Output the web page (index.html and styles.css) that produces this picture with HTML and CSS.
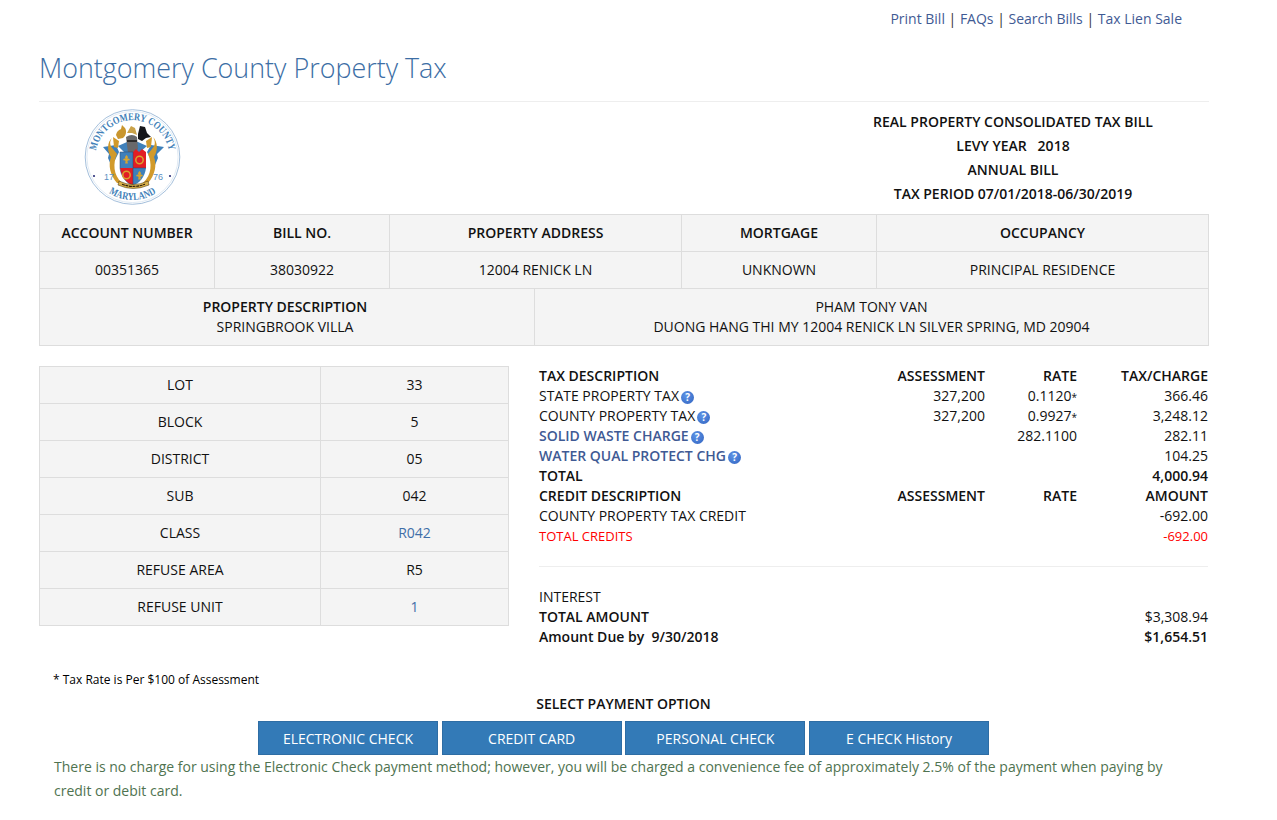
FILE: index.html
```html
<!DOCTYPE html>
<html lang="en">
<head>
    <meta charset="UTF-8">
    <title>Montgomery County Property Tax</title>
    <link rel="stylesheet" href="styles.css">
</head>
<body>
    <div class="page">
        <nav class="top-links">
            <a href="#">Print Bill</a> | <a href="#">FAQs</a> | <a href="#">Search Bills</a> | <a href="#">Tax Lien Sale</a>
        </nav>
        <h1 class="site-title">Montgomery County Property Tax</h1>

        <div class="bill-head">
            <div class="seal-box">
                <svg class="seal" viewBox="0 0 105 105" width="105" height="105" role="img" aria-label="Montgomery County seal">
                    <defs>
                        <path id="sealArc" d="M16.4 60.3 A37 37 0 1 1 88.6 60.3"/>
                        <path id="sealArcLow" d="M27.8 87.2 A43 43 0 0 0 77.2 87.2"/>
                        <path id="fleur" d="M0 -5 C1.8 -3.4 1.8 -1.8 .7 -.9 C1.8 -2.2 3.6 -1.3 3.2 .6 C2.7 .2 1.8 .2 .9 .9 L1.4 3.4 H-1.4 L-.9 .9 C-1.8 .2 -2.7 .2 -3.2 .6 C-3.6 -1.3 -1.8 -2.2 -.7 -.9 C-1.8 -1.8 -1.8 -3.4 0 -5 Z"/>
                    </defs>
                    <circle class="seal-ring" cx="52.5" cy="52" r="47.3"/>
                    <circle class="seal-ring thin" cx="52.5" cy="52" r="45.6"/>
                    <text class="seal-text"><textPath href="#sealArc" startOffset="50%" text-anchor="middle" textLength="103" lengthAdjust="spacingAndGlyphs">MONTGOMERY COUNTY</textPath></text>
                    <text class="seal-text"><textPath href="#sealArcLow" startOffset="50%" text-anchor="middle" textLength="50" lengthAdjust="spacingAndGlyphs">MARYLAND</textPath></text>

                    <!-- crest birds and wreath -->
                    <path d="M36 30 C37 26 39 25 41 24 L42 20 L45 23 C47 26 46 31 43 33 L38 34 Z" fill="#c9962e"/>
                    <path d="M58 29 L60 21 L65 22 L67 28 L71 32 L66 33 L62 36 L58 34 Z" fill="#16161a"/>
                    <path d="M47 28 L51 21 L55 23 L57 30 L52 28 Z" fill="#c9a24a"/>

                    <!-- blue capes -->
                    <path d="M23 42 L36 40 L39 47 L35 55 L31 60 L28 53 L29 49 Z" fill="#3f80ba"/>
                    <path d="M84 42 L71 40 L67 47 L71 55 L75 60 L78 53 L77 49 Z" fill="#3f80ba"/>

                    <!-- supporters -->
                    <path d="M32 33 C29 37 30 41 33 44 L37 49 C33 58 33 70 42 78 L37 78 C30 70 28 60 31 52 C27 46 27 37 32 33 Z" fill="#d19a2b"/>
                    <path d="M73 32 C78 37 78 46 74 52 C77 60 75 70 68 78 L63 78 C72 70 72 58 68 49 L72 44 C75 41 76 37 73 32 Z" fill="#d19a2b"/>
                    <path d="M33 32 L39 36 L38 43 L34 42 Z" fill="#d19a2b"/>
                    <path d="M72 32 L66 36 L67 43 L71 42 Z" fill="#d19a2b"/>

                    <!-- helmet and mantling -->
                    <path d="M38 41 L47 37 L58 37 L67 41 L60 47 L44 47 Z" fill="#3f80ba"/>
                    <path d="M46 32 Q52 28 57 32 L58 44 L53 50 L48 48 Z" fill="#69696b"/>
                    <rect x="47" y="35" width="10" height="2" fill="#2d2d2d"/>

                    <!-- shield -->
                    <path d="M40 47 H53 V63 H40 Z" fill="#3f80ba"/>
                    <path d="M53 47 L56 44 L59 47 L62 44 L66 47 V63 H53 Z" fill="#e21d24"/>
                    <path d="M40 63 H53 V80 C47 79 41 72 40 63 Z" fill="#e21d24"/>
                    <path d="M53 63 H66 C65 72 59 79 53 80 Z" fill="#3f80ba"/>
                    <path d="M40 47 H53 V80 C47 79 41 72 40 63 Z M53 63 H66" fill="none" stroke="#26476e" stroke-width=".5"/>
                    <use href="#fleur" x="46.5" y="55" fill="#d9a42e"/>
                    <use href="#fleur" x="59.5" y="71" fill="#d9a42e"/>
                    <circle cx="59.5" cy="55" r="3.7" fill="#e21d24" stroke="#d9a42e" stroke-width="1.5"/>
                    <circle cx="46.5" cy="70" r="3.7" fill="#e21d24" stroke="#d9a42e" stroke-width="1.5"/>

                    <!-- motto ribbon -->
                    <path d="M39 76 Q53 83 68 76 L69 80 Q53 87 38 80 Z" fill="#d8b04a" stroke="#3a2a10" stroke-width=".5"/>
                    <path d="M42 79.2 Q53 83.6 65 79.2" fill="none" stroke="#2c1d0a" stroke-width="1.1" stroke-dasharray="3 .6"/>

                    <text class="seal-year" x="24" y="75">17</text>
                    <text class="seal-year" x="73" y="75">76</text>
                    <circle cx="14" cy="71" r="1.1" fill="#2b2f7a"/>
                    <circle cx="90" cy="71" r="1.1" fill="#2b2f7a"/>
                </svg>
            </div>
            <div class="bill-title">
                <div>REAL PROPERTY CONSOLIDATED TAX BILL</div>
                <div>LEVY YEAR &nbsp; 2018</div>
                <div>ANNUAL BILL</div>
                <div>TAX PERIOD 07/01/2018-06/30/2019</div>
            </div>
        </div>

        <div class="account-grid">
            <div class="cell strong">ACCOUNT NUMBER</div>
            <div class="cell strong">BILL NO.</div>
            <div class="cell strong">PROPERTY ADDRESS</div>
            <div class="cell strong">MORTGAGE</div>
            <div class="cell strong">OCCUPANCY</div>
            <div class="cell">00351365</div>
            <div class="cell">38030922</div>
            <div class="cell">12004 RENICK LN</div>
            <div class="cell">UNKNOWN</div>
            <div class="cell">PRINCIPAL RESIDENCE</div>
        </div>
        <div class="owner-grid">
            <div class="cell tall desc"><b>PROPERTY DESCRIPTION</b><br>SPRINGBROOK VILLA</div>
            <div class="cell tall">PHAM TONY VAN<br>DUONG HANG THI MY 12004 RENICK LN SILVER SPRING, MD 20904</div>
        </div>

        <div class="detail">
            <div class="lot-grid">
                <div class="cell">LOT</div><div class="cell">33</div>
                <div class="cell">BLOCK</div><div class="cell">5</div>
                <div class="cell">DISTRICT</div><div class="cell">05</div>
                <div class="cell">SUB</div><div class="cell">042</div>
                <div class="cell">CLASS</div><div class="cell"><a href="#">R042</a></div>
                <div class="cell">REFUSE AREA</div><div class="cell">R5</div>
                <div class="cell">REFUSE UNIT</div><div class="cell"><a href="#">1</a></div>
            </div>

            <div class="tax-side">
                <div class="tax-row strong"><span>TAX DESCRIPTION</span><span>ASSESSMENT</span><span>RATE</span><span>TAX/CHARGE</span></div>
                <div class="tax-row"><span>STATE PROPERTY TAX <i class="help">?</i></span><span>327,200</span><span>0.1120<small>*</small></span><span>366.46</span></div>
                <div class="tax-row"><span>COUNTY PROPERTY TAX <i class="help">?</i></span><span>327,200</span><span>0.9927<small>*</small></span><span>3,248.12</span></div>
                <div class="tax-row"><span><a href="#">SOLID WASTE CHARGE</a> <i class="help">?</i></span><span></span><span>282.1100</span><span>282.11</span></div>
                <div class="tax-row"><span><a href="#">WATER QUAL PROTECT CHG</a> <i class="help">?</i></span><span></span><span></span><span>104.25</span></div>
                <div class="tax-row strong"><span>TOTAL</span><span></span><span></span><span>4,000.94</span></div>
                <div class="tax-row strong"><span>CREDIT DESCRIPTION</span><span>ASSESSMENT</span><span>RATE</span><span>AMOUNT</span></div>
                <div class="tax-row"><span>COUNTY PROPERTY TAX CREDIT</span><span></span><span></span><span>-692.00</span></div>
                <div class="tax-row red"><span>TOTAL CREDITS</span><span></span><span></span><span>-692.00</span></div>
                <hr class="rule">
                <div class="tax-row"><span>INTEREST</span><span></span><span></span><span></span></div>
                <div class="tax-row strong"><span>TOTAL AMOUNT</span><span></span><span></span><span class="plain">$3,308.94</span></div>
                <div class="tax-row strong"><span>Amount Due by &nbsp;9/30/2018</span><span></span><span></span><span>$1,654.51</span></div>
            </div>
        </div>

        <p class="rate-note">* Tax Rate is Per $100 of Assessment</p>
        <div class="pay-title">SELECT PAYMENT OPTION</div>
        <div class="pay-buttons">
            <button type="button">ELECTRONIC CHECK</button>
            <button type="button">CREDIT CARD</button>
            <button type="button">PERSONAL CHECK</button>
            <button type="button">E CHECK History</button>
        </div>
        <p class="fee-note">There is no charge for using the Electronic Check payment method; however, you will be charged a convenience fee of approximately 2.5% of the payment when paying by credit or debit card.</p>
    </div>
</body>
</html>
```

FILE: styles.css
```css
body {
    margin: 0;
    background-color: #fff;
    color: #111;
    font-family: "Open Sans", sans-serif;
    font-size: 14px;
    line-height: 20px;
}

a {
    color: #3f5a94;
    text-decoration: none;
}

.page {
    width: 1170px;
    margin-left: 39px;
}

.top-links {
    padding: 9px 27px 0 0;
    text-align: right;
    color: #333;
}

.site-title {
    margin: 20px 0 0;
    padding-bottom: 14px;
    border-bottom: 1px solid #eee;
    color: #3c6ea5;
    font-size: 26.9px;
    font-weight: 300;
    line-height: 38px;
}

.bill-head {
    display: flex;
    height: 112px;
}

.seal-box {
    width: 188px;
    padding: 3px 0 0 41px;
    box-sizing: border-box;
}

.seal {
    display: block;
}

.seal-ring {
    fill: none;
    stroke: #7da3cc;
    stroke-width: .7;
}

.seal-ring.thin {
    stroke: #b5cde4;
    stroke-width: .4;
}

.seal-text {
    fill: #3f7fb8;
    font-family: "Liberation Serif", serif;
    font-size: 10.5px;
    font-weight: bold;
}

.seal-year {
    fill: #5a8fc2;
    font-family: "Liberation Sans", sans-serif;
    font-size: 9px;
}

.bill-title {
    width: 360px;
    margin-left: auto;
    margin-right: 16px;
    padding-top: 8px;
    font-weight: 600;
    line-height: 24px;
    text-align: center;
}

.cell {
    display: flex;
    align-items: center;
    justify-content: center;
    box-sizing: border-box;
    height: 37px;
    border-right: 1px solid #ddd;
    border-bottom: 1px solid #ddd;
    background-color: #f4f4f4;
    text-align: center;
}

.cell.strong {
    font-weight: 600;
}

.cell.tall {
    display: block;
    height: 57px;
    padding-top: 8px;
}

.cell.desc {
    padding-right: 4px;
}

.account-grid {
    display: grid;
    grid-template-columns: 175px 175px 292px 195px 332px;
    border-top: 1px solid #ddd;
    border-left: 1px solid #ddd;
}

.owner-grid {
    display: grid;
    grid-template-columns: 495px 674px;
    border-left: 1px solid #ddd;
}

.owner-grid b {
    font-weight: 600;
}

.detail {
    display: flex;
    margin-top: 20px;
}

.lot-grid {
    display: grid;
    grid-template-columns: 281px 188px;
    align-self: flex-start;
    border-top: 1px solid #ddd;
    border-left: 1px solid #ddd;
}

.lot-grid a {
    color: #3f6ea8;
}

.tax-side {
    flex: 1;
    margin-left: 30px;
    padding-right: 1px;
}

.tax-row {
    display: grid;
    grid-template-columns: 299px 147px 92px 131px;
    height: 20px;
}

.tax-row span + span {
    text-align: right;
}

.tax-row a {
    font-weight: 600;
}

.tax-row.strong {
    font-weight: 600;
}

.tax-row.red {
    color: #f00;
    font-size: 13px;
}

.tax-row .plain {
    font-weight: 400;
}

.tax-row small {
    font-size: 10px;
}

.help {
    display: inline-block;
    width: 13px;
    height: 13px;
    margin-left: -1.5px;
    border-radius: 50%;
    background: radial-gradient(circle at 40% 35%, #5f94e6, #2f62c0);
    color: #fff;
    font-size: 10px;
    font-style: normal;
    font-weight: 700;
    line-height: 13px;
    text-align: center;
}

.rule {
    height: 1px;
    margin: 20px 0;
    border: 0;
    background-color: #eee;
}

.rate-note {
    margin: 23px 0 0 14px;
    color: #000;
    font-size: 12px;
    line-height: 20px;
}

.pay-title {
    width: 1169px;
    margin-top: 4px;
    font-weight: 600;
    text-align: center;
}

.pay-buttons {
    display: flex;
    justify-content: center;
    gap: 3.7px;
    width: 1169px;
    margin-top: 7px;
}

.pay-buttons button {
    width: 180px;
    height: 34px;
    border: 1px solid #2e6da4;
    background-color: #337ab7;
    color: #fff;
    font-family: "Open Sans", sans-serif;
    font-size: 14px;
}

.fee-note {
    margin: 0 30px 0 15px;
    color: #4f7350;
    line-height: 24px;
}
```
